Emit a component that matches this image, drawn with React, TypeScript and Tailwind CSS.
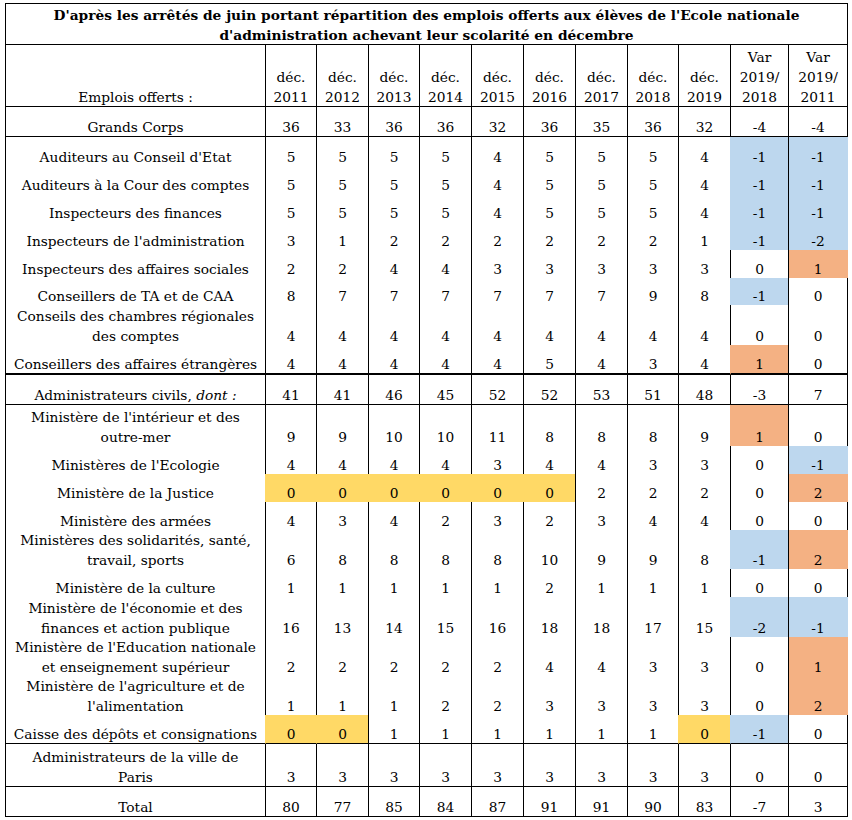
import React from 'react';

type Fill = 'b' | 'o' | 'y' | '.';

interface Row {
  label: React.ReactNode[];
  values: (string | number)[];
  h: string;
  bottom?: 'thin' | 'thick';
  fills?: string;
}

const BG: Record<string, string> = {
  b: 'bg-[#bdd7ee]',
  o: 'bg-[#f4b183]',
  y: 'bg-[#ffd966]',
};

const RIGHT: Record<string, string> = {
  b: 'border-r-[#bdd7ee]',
  o: 'border-r-[#f4b183]',
  y: 'border-r-[#ffd966]',
};

const rows: Row[] = [
  { label: ['Grands Corps'], values: [36, 33, 36, 36, 32, 36, 35, 36, 32, -4, -4], h: 'h-[30px]', bottom: 'thin' },
  { label: ["Auditeurs au Conseil d'Etat"], values: [5, 5, 5, 5, 4, 5, 5, 5, 4, -1, -1], h: 'h-[29px]', fills: '.........bb' },
  { label: ['Auditeurs à la Cour des comptes'], values: [5, 5, 5, 5, 4, 5, 5, 5, 4, -1, -1], h: 'h-[28px]', fills: '.........bb' },
  { label: ['Inspecteurs des finances'], values: [5, 5, 5, 5, 4, 5, 5, 5, 4, -1, -1], h: 'h-[28px]', fills: '.........bb' },
  { label: ["Inspecteurs de l'administration"], values: [3, 1, 2, 2, 2, 2, 2, 2, 1, -1, -2], h: 'h-[28px]', fills: '.........bb' },
  { label: ['Inspecteurs des affaires sociales'], values: [2, 2, 4, 4, 3, 3, 3, 3, 3, 0, 1], h: 'h-[28px]', fills: '..........o' },
  { label: ['Conseillers de TA et de CAA'], values: [8, 7, 7, 7, 7, 7, 7, 9, 8, -1, 0], h: 'h-[27px]', fills: '.........b.' },
  { label: ['Conseils des chambres régionales', 'des comptes'], values: [4, 4, 4, 4, 4, 4, 4, 4, 4, 0, 0], h: 'h-[40px]' },
  { label: ['Conseillers des affaires étrangères'], values: [4, 4, 4, 4, 4, 5, 4, 3, 4, 1, 0], h: 'h-[30px]', bottom: 'thick', fills: '.........o.' },
  {
    label: [
      <>
        Administrateurs civils, <i>dont :</i>
      </>,
    ],
    values: [41, 41, 46, 45, 52, 52, 53, 51, 48, -3, 7],
    h: 'h-[30px]',
    bottom: 'thin',
  },
  { label: ["Ministère de l'intérieur et des", 'outre-mer'], values: [9, 9, 10, 10, 11, 8, 8, 8, 9, 1, 0], h: 'h-[41px]', fills: '.........o.' },
  { label: ["Ministères de l'Ecologie"], values: [4, 4, 4, 4, 3, 4, 4, 3, 3, 0, -1], h: 'h-[28px]', fills: '..........b' },
  { label: ['Ministère de la Justice'], values: [0, 0, 0, 0, 0, 0, 2, 2, 2, 0, 2], h: 'h-[28px]', fills: 'yyyyyy....o' },
  { label: ['Ministère des armées'], values: [4, 3, 4, 2, 3, 2, 3, 4, 4, 0, 0], h: 'h-[28px]' },
  { label: ['Ministères des solidarités, santé,', 'travail, sports'], values: [6, 8, 8, 8, 8, 10, 9, 9, 8, -1, 2], h: 'h-[39px]', fills: '.........bo' },
  { label: ['Ministère de la culture'], values: [1, 1, 1, 1, 1, 2, 1, 1, 1, 0, 0], h: 'h-[28px]' },
  { label: ["Ministère de l'économie et des", 'finances et action publique'], values: [16, 13, 14, 15, 16, 18, 18, 17, 15, -2, -1], h: 'h-[40px]', fills: '.........bb' },
  { label: ["Ministère de l'Education nationale", 'et enseignement supérieur'], values: [2, 2, 2, 2, 2, 4, 4, 3, 3, 0, 1], h: 'h-[39px]', fills: '..........o' },
  { label: ["Ministère de l'agriculture et de", "l'alimentation"], values: [1, 1, 1, 2, 2, 3, 3, 3, 3, 0, 2], h: 'h-[39px]', fills: '..........o' },
  { label: ['Caisse des dépôts et consignations'], values: [0, 0, 1, 1, 1, 1, 1, 1, 0, -1, 0], h: 'h-[29px]', bottom: 'thin', fills: 'yy......yb.' },
  { label: ['Administrateurs de la ville de', 'Paris'], values: [3, 3, 3, 3, 3, 3, 3, 3, 3, 0, 0], h: 'h-[43px]', bottom: 'thin' },
  { label: ['Total'], values: [80, 77, 85, 84, 87, 91, 91, 90, 83, -7, 3], h: 'h-[30px]', bottom: 'thin' },
];

const headers: string[][] = [
  ['déc.', '2011'],
  ['déc.', '2012'],
  ['déc.', '2013'],
  ['déc.', '2014'],
  ['déc.', '2015'],
  ['déc.', '2016'],
  ['déc.', '2017'],
  ['déc.', '2018'],
  ['déc.', '2019'],
  ['Var', '2019/', '2018'],
  ['Var', '2019/', '2011'],
];

function Cell({
  lines,
  h,
  bottom,
  right = 'border-r-black',
  bg = '',
}: {
  lines: React.ReactNode[];
  h: string;
  bottom?: 'thin' | 'thick';
  right?: string;
  bg?: string;
}) {
  const b = bottom === 'thick' ? 'border-b-2 border-b-black' : bottom === 'thin' ? 'border-b border-b-black' : '';
  return (
    <div className={`${h} ${b} ${bg} ${right} border-r flex flex-col justify-end items-center text-center`}>
      <div className="translate-y-px">
        {lines.map((l, i) => (
          <div key={i} className="leading-[20px] whitespace-nowrap">
            {l}
          </div>
        ))}
      </div>
    </div>
  );
}

function rightBorder(fills: string, i: number): string {
  // fill of a cell paints over the grid line on its left (except the last Var column)
  if (i === 10) {
    const own = fills[10] as Fill;
    return own !== '.' ? RIGHT[own] : 'border-r-black';
  }
  if (i === 9) return 'border-r-black';
  const next = fills[i + 1] as Fill;
  return next !== '.' ? RIGHT[next] : 'border-r-black';
}

export default function App() {
  return (
    <div className="bg-white min-h-[820px] pt-[3px] pl-[5px] text-black font-['DejaVu_Serif',serif] text-[13.75px]">
      <div className="w-[843px] border-l border-t border-black grid grid-cols-[260px_51px_52px_51px_52px_52px_52px_52px_51px_52px_58px_59px]">
        <div className="col-span-12 h-[41px] border-r border-b border-black flex flex-col justify-end items-center font-bold text-[13.75px]">
          <div className="translate-y-px text-center">
            <div className="leading-[20px] whitespace-nowrap">
              D'après les arrêtés de juin portant répartition des emplois offerts aux élèves de l'Ecole nationale
            </div>
            <div className="leading-[20px] whitespace-nowrap">d'administration achevant leur scolarité en décembre</div>
          </div>
        </div>

        <Cell lines={['Emplois offerts :']} h="h-[62px]" bottom="thin" />
        {headers.map((hd, i) => (
          <Cell key={i} lines={hd} h="h-[62px]" bottom="thin" />
        ))}

        {rows.map((r, ri) => {
          const fills = r.fills ?? '...........';
          const first = fills[0] as Fill;
          return (
            <React.Fragment key={ri}>
              <Cell lines={r.label} h={r.h} bottom={r.bottom} right={first !== '.' ? RIGHT[first] : 'border-r-black'} />
              {r.values.map((v, i) => {
                const f = fills[i] as Fill;
                return (
                  <Cell
                    key={i}
                    lines={[String(v)]}
                    h={r.h}
                    bottom={r.bottom}
                    bg={f !== '.' ? BG[f] : ''}
                    right={rightBorder(fills, i)}
                  />
                );
              })}
            </React.Fragment>
          );
        })}
      </div>
    </div>
  );
}
